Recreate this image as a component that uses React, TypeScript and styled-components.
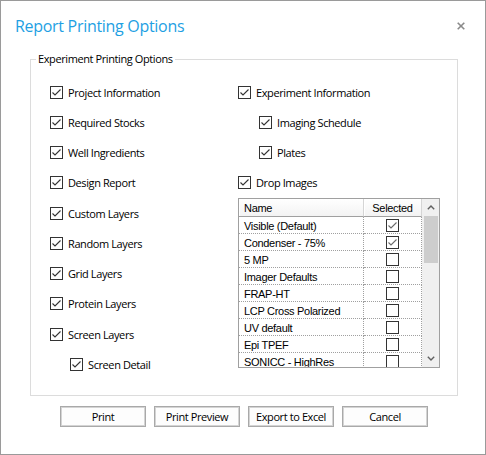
import React from 'react';
import styled, { createGlobalStyle } from 'styled-components';

const Global = createGlobalStyle`
  html, body { margin: 0; padding: 0; background: #fff; }
  body { font-family: "Open Sans", "Noto Sans", sans-serif; color: #000; }
`;

const Window = styled.div`
  box-sizing: border-box;
  width: 486px;
  height: 455px;
  border: 1px solid #9a9a9a;
  background: #fff;
  display: flex;
  flex-direction: column;
`;

const TitleBar = styled.div`
  height: 50px;
  display: flex;
  align-items: center;
  justify-content: space-between;
  padding: 0 20px 0 14px;
`;

const Title = styled.h1`
  margin: 0;
  font-family: "Open Sans", sans-serif;
  font-weight: 400;
  font-size: 16px;
  letter-spacing: -0.3px;
  color: #1e9fe3;
`;

const CloseButton = styled.button`
  border: 0;
  background: none;
  padding: 0;
  width: 8px;
  height: 8px;
  display: flex;
  cursor: pointer;
`;

const GroupBox = styled.fieldset`
  margin: 0 27px 0 29px;
  padding: 10px 0 15px 0;
  border: 1px solid #dcdcdc;
  min-width: 0;
`;

const Legend = styled.legend`
  margin-left: 5px;
  padding: 0 2px;
  font-size: 11px;
  letter-spacing: -0.4px;
  line-height: 16px;
`;

const Columns = styled.div`
  display: flex;
  padding-left: 19px;
`;

const LeftCol = styled.div`
  width: 188px;
  display: flex;
  flex-direction: column;
`;

const RightCol = styled.div`
  display: flex;
  flex-direction: column;
`;

const CheckRow = styled.label<{ $indent?: number }>`
  height: 30.25px;
  display: flex;
  align-items: center;
  gap: 5px;
  padding-left: ${p => p.$indent ?? 0}px;
  font-size: 11px;
  letter-spacing: -0.4px;
  white-space: nowrap;
`;

const Box = styled.span<{ $mark?: string }>`
  box-sizing: border-box;
  width: 13px;
  height: 13px;
  border: 1px solid #333;
  background: #fff;
  display: flex;
  align-items: center;
  justify-content: center;
  flex: none;
  svg { display: block; }
  polyline { stroke: ${p => p.$mark ?? '#333'}; }
`;

const Check = ({ checked = true, mark }: { checked?: boolean; mark?: string }) => (
  <Box $mark={mark}>
    {checked && (
      <svg width="11" height="11" viewBox="0 0 11 11">
        <polyline points="1.5,5.5 4,8 9.5,2.5" fill="none" strokeWidth="1.1" />
      </svg>
    )}
  </Box>
);

const Grid = styled.div`
  box-sizing: border-box;
  width: 202px;
  height: 170px;
  border: 1px solid #a0a0a0;
  display: flex;
  overflow: hidden;
  font-family: "Liberation Sans", Arial, sans-serif;
  font-size: 11px;
  letter-spacing: -0.3px;
`;

const Table = styled.div`
  flex: 1;
  display: flex;
  flex-direction: column;
  overflow: hidden;
`;

const Row = styled.div`
  display: grid;
  grid-template-columns: 125px 1fr;
  flex: none;
`;

const HeadCell = styled.div<{ $center?: boolean }>`
  box-sizing: border-box;
  height: 18px;
  padding: 3px 0 0 ${p => (p.$center ? 0 : 5)}px;
  line-height: 13px;
  text-align: ${p => (p.$center ? 'center' : 'left')};
  background: linear-gradient(#ffffff, #f3f3f3);
  border-right: 1px solid #d5d5d5;
  border-bottom: 1px solid #a0a0a0;
  box-shadow: inset 1px 0 0 #fff;
`;

const Cell = styled.div<{ $center?: boolean }>`
  box-sizing: border-box;
  height: 17px;
  padding: 2px 0 0 ${p => (p.$center ? 0 : 5)}px;
  line-height: 14px;
  border-right: 1px dotted #a0a0a0;
  border-bottom: 1px dotted #a0a0a0;
  display: flex;
  justify-content: ${p => (p.$center ? 'center' : 'flex-start')};
  align-items: ${p => (p.$center ? 'center' : 'flex-start')};
  white-space: nowrap;
  ${p => (p.$center ? 'padding-top: 0;' : '')}
`;

const ScrollBar = styled.div`
  width: 17px;
  flex: none;
  background: #f0f0f0;
  display: flex;
  flex-direction: column;
`;

const ScrollArrow = styled.div`
  height: 17px;
  flex: none;
  display: flex;
  align-items: center;
  justify-content: center;
`;

const Thumb = styled.div`
  height: 47px;
  margin: 0 1px 0 2px;
  background: #cdcdcd;
  flex: none;
`;

const Track = styled.div`
  flex: 1;
`;

const ButtonRow = styled.div`
  display: flex;
  gap: 8px;
  padding: 10px 0 0 59px;
`;

const Button = styled.button`
  box-sizing: border-box;
  width: 86px;
  height: 21px;
  padding: 0;
  border: 1px solid #a9a9a9;
  box-shadow: inset 0 0 0 1px #d4d4d4;
  background: #fdfdfd;
  font-family: "Open Sans", sans-serif;
  font-size: 11px;
  letter-spacing: -0.4px;
  color: #000;
`;

const Chevron = ({ up }: { up?: boolean }) => (
  <svg width="8" height="5" viewBox="0 0 8 5">
    <polyline
      points={up ? '0.8,4.2 4,1 7.2,4.2' : '0.8,0.8 4,4 7.2,0.8'}
      fill="none"
      stroke="#606060"
      strokeWidth="1.4"
    />
  </svg>
);

const leftItems: { label: string; indent?: number }[] = [
  { label: 'Project Information' },
  { label: 'Required Stocks' },
  { label: 'Well Ingredients' },
  { label: 'Design Report' },
  { label: 'Custom Layers' },
  { label: 'Random Layers' },
  { label: 'Grid Layers' },
  { label: 'Protein Layers' },
  { label: 'Screen Layers' },
  { label: 'Screen Detail', indent: 20 },
];

const rightItems: { label: string; indent?: number }[] = [
  { label: 'Experiment Information' },
  { label: 'Imaging Schedule', indent: 21 },
  { label: 'Plates', indent: 21 },
  { label: 'Drop Images' },
];

const images: { name: string; selected: boolean }[] = [
  { name: 'Visible (Default)', selected: true },
  { name: 'Condenser - 75%', selected: true },
  { name: '5 MP', selected: false },
  { name: 'Imager Defaults', selected: false },
  { name: 'FRAP-HT', selected: false },
  { name: 'LCP Cross Polarized', selected: false },
  { name: 'UV default', selected: false },
  { name: 'Epi TPEF', selected: false },
  { name: 'SONICC - HighRes', selected: false },
];

export default function App() {
  return (
    <>
      <Global />
      <Window>
        <TitleBar>
          <Title>Report Printing Options</Title>
          <CloseButton aria-label="Close">
            <svg width="8" height="8" viewBox="0 0 8 8">
              <path d="M0.7 0.7 L7.3 7.3 M7.3 0.7 L0.7 7.3" stroke="#8a8a8a" strokeWidth="1.6" />
            </svg>
          </CloseButton>
        </TitleBar>
        <GroupBox>
          <Legend>Experiment Printing Options</Legend>
          <Columns>
            <LeftCol>
              {leftItems.map(it => (
                <CheckRow key={it.label} $indent={it.indent}>
                  <Check />
                  {it.label}
                </CheckRow>
              ))}
            </LeftCol>
            <RightCol>
              {rightItems.map(it => (
                <CheckRow key={it.label} $indent={it.indent}>
                  <Check />
                  {it.label}
                </CheckRow>
              ))}
              <Grid>
                <Table>
                  <Row>
                    <HeadCell>Name</HeadCell>
                    <HeadCell $center>Selected</HeadCell>
                  </Row>
                  {images.map(img => (
                    <Row key={img.name}>
                      <Cell>{img.name}</Cell>
                      <Cell $center>
                        <Check checked={img.selected} mark="#6a6a6a" />
                      </Cell>
                    </Row>
                  ))}
                </Table>
                <ScrollBar>
                  <ScrollArrow>
                    <Chevron up />
                  </ScrollArrow>
                  <Thumb />
                  <Track />
                  <ScrollArrow>
                    <Chevron />
                  </ScrollArrow>
                </ScrollBar>
              </Grid>
            </RightCol>
          </Columns>
        </GroupBox>
        <ButtonRow>
          <Button>Print</Button>
          <Button>Print Preview</Button>
          <Button>Export to Excel</Button>
          <Button>Cancel</Button>
        </ButtonRow>
      </Window>
    </>
  );
}
